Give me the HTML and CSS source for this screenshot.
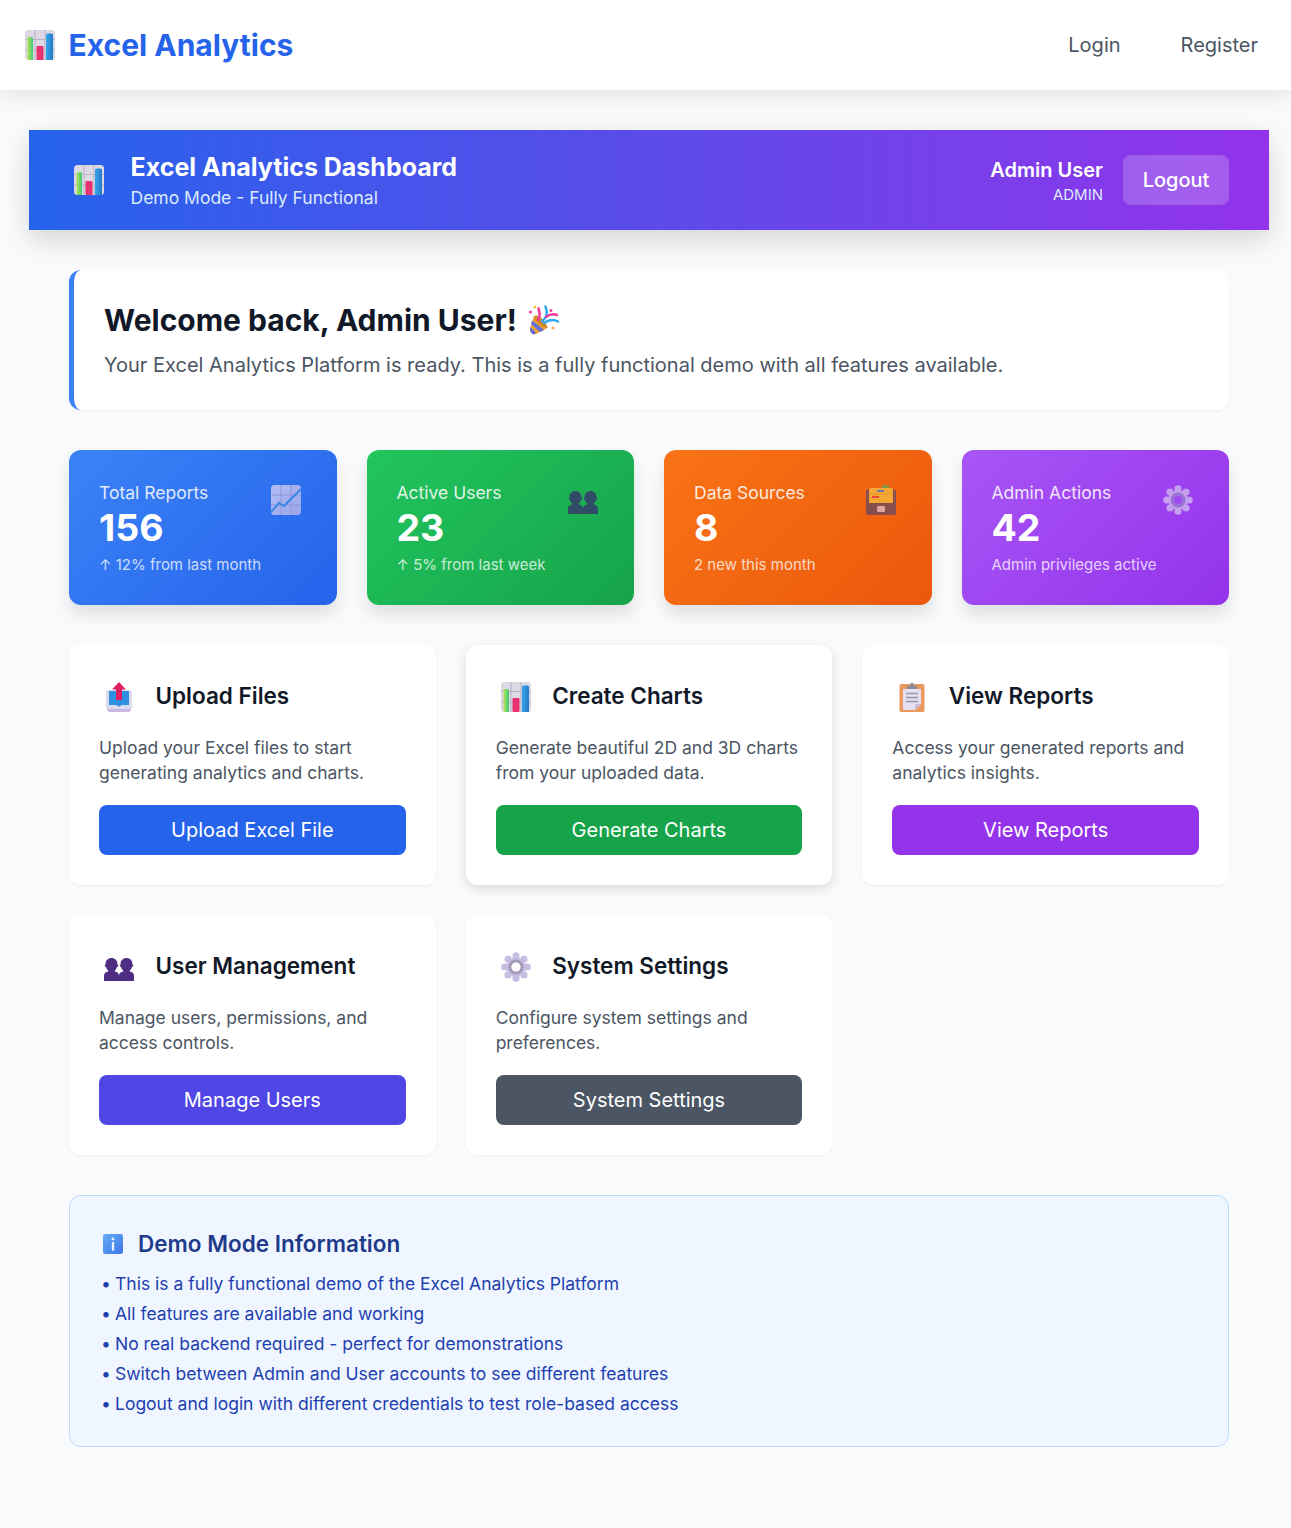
FILE: index.html
```html
<!DOCTYPE html>
<html lang="en">
<head>
    <meta charset="UTF-8">
    <meta name="viewport" content="width=device-width, initial-scale=1.0">
    <title>Excel Analytics Dashboard</title>
    <link rel="stylesheet" href="styles.css">
</head>
<body>
    <svg class="sprites" aria-hidden="true">
        <defs>
            <linearGradient id="barGreen" x1="0" y1="0" x2="1" y2="0"><stop offset="0" stop-color="#b4e655"/><stop offset="1" stop-color="#3fc878"/></linearGradient>
            <linearGradient id="barBlue" x1="0" y1="0" x2="1" y2="0"><stop offset="0" stop-color="#2ea8f0"/><stop offset="1" stop-color="#2a78c4"/></linearGradient>
            <linearGradient id="sheet" x1="0" y1="0" x2="1" y2="1"><stop offset="0" stop-color="#d4d0f4"/><stop offset="1" stop-color="#b8b4ea"/></linearGradient>
            <linearGradient id="infoBlue" x1="0" y1="0" x2="1" y2="1"><stop offset="0" stop-color="#62aef5"/><stop offset="1" stop-color="#3f74e8"/></linearGradient>
            <path id="person" d="M7.500 6c3.600 0 5.900 2.500 5.900 5.600 0 .3 0 .6-.1.9.6.1 1 .5 1 1.100 0 .7-.5 1.200-1.300 1.300-.4 1.500-1.100 2.700-2.200 3.500v1.200c2.400.3 4.200 1.700 4.200 4.200V29H0v-5.200c0-2.500 1.800-3.900 4.200-4.200v-1.200c-1.100-.8-1.800-2-2.200-3.500-.8-.1-1.300-.6-1.300-1.300 0-.6.4-1 1-1.100-.1-.3-.1-.6-.1-.9C1.600 8.500 3.900 6 7.500 6z"/>
        </defs>
        <symbol id="ic-bars" viewBox="0 0 30 30">
            <rect width="30" height="30" rx="3.500" fill="#dcd8e4"/>
            <path d="M0 9.500h30M0 20h30M10 0v30M20 0v30" stroke="#b9b3c4" stroke-width="1"/>
            <path d="M2.500 8.500a1.500 1.500 0 0 1 1.500-1.500h2.500a1.500 1.500 0 0 1 1.500 1.500V30H2.500z" fill="url(#barGreen)"/>
            <rect x="11.500" y="16" width="7" height="14" rx="1" fill="#e8316f"/>
            <path d="M21 5a1.500 1.500 0 0 1 1.500-1.500h4a1.500 1.500 0 0 1 1.500 1.500v25h-7z" fill="url(#barBlue)"/>
        </symbol>
        <symbol id="ic-party" viewBox="0 0 30 30">
            <path d="M5 11 18.500 23 6 29.500Q.5 29 1 23.500z" fill="#f0a030"/>
            <path d="M3 15.500 15 25 11 27 2 19zM1.500 22 7 28 4 29.500 1 26z" fill="#5a70e0"/>
            <path d="M5 11Q9 9 14 15T18.500 23Q14 23 9 18T5 11z" fill="#d08a28"/>
            <path d="M9 15Q12 11 9.500 3.500" fill="none" stroke="#f0399a" stroke-width="2.500" stroke-linecap="round"/>
            <path d="M13 16Q20 12 16.500 1.500" fill="none" stroke="#2ea8f0" stroke-width="2.500" stroke-linecap="round"/>
            <path d="M17 12Q22 8 28 10" fill="none" stroke="#f0399a" stroke-width="2.500" stroke-linecap="round"/>
            <path d="M15 18Q22 13 29 16.500" fill="none" stroke="#2ea8f0" stroke-width="2.500" stroke-linecap="round"/>
            <circle cx="6" cy="2" r="1.500" fill="#f5c842"/><circle cx="1.500" cy="7" r="1.500" fill="#f0399a"/>
            <circle cx="22" cy="5.500" r="1.500" fill="#f0399a"/><circle cx="24" cy="23" r="1.600" fill="#f0b060"/>
        </symbol>
        <symbol id="ic-trend" viewBox="0 0 30 30">
            <rect width="30" height="30" rx="3.500" fill="url(#sheet)"/>
            <path d="M0 10h30M0 20h30M10 0v30M20 0v30" stroke="#a09bd4" stroke-width=".8"/>
            <path d="M0 27 8 18l5 3L30 4" fill="none" stroke="#3a8fe0" stroke-width="2"/>
        </symbol>
        <symbol id="ic-people" viewBox="0 0 30 30">
            <use href="#person" fill="currentColor"/>
            <use href="#person" x="15" fill="currentColor"/>
        </symbol>
        <symbol id="ic-files" viewBox="0 0 30 30">
            <rect x="16" y="0" width="7" height="4" rx="1" fill="#6aa84f"/>
            <path d="M0 6.500a2 2 0 0 1 2-2h26a2 2 0 0 1 2 2V28a2 2 0 0 1-2 2H2a2 2 0 0 1-2-2z" fill="#6e4a5e"/>
            <path d="M3 5a2 2 0 0 1 2-2h20a2 2 0 0 1 2 2v13H3z" fill="#f5b83d"/>
            <rect x="11" y="5" width="7" height="2" fill="#4a80d0"/>
            <rect x="6" y="11" width="7" height="2" fill="#e8403f"/>
            <path d="M3 9h24" stroke="#e8a52c" stroke-width="1"/>
            <rect x="11" y="21" width="8" height="6" rx="1" fill="#d8b8c0"/>
        </symbol>
        <symbol id="ic-gear" viewBox="0 0 30 30">
            <g fill="currentColor">
                <circle cx="15" cy="3.800" r="3.600"/><circle cx="15" cy="26.200" r="3.600"/>
                <circle cx="3.800" cy="15" r="3.600"/><circle cx="26.200" cy="15" r="3.600"/>
                <circle cx="7" cy="7" r="3.600"/><circle cx="23" cy="7" r="3.600"/>
                <circle cx="7" cy="23" r="3.600"/><circle cx="23" cy="23" r="3.600"/>
                <circle cx="15" cy="15" r="9.800"/>
            </g>
            <circle cx="15" cy="15" r="6" fill="none" stroke="var(--ring, #a49ab8)" stroke-width="3"/>
            <circle cx="15" cy="15" r="4.600" fill="var(--hole, #fff)"/>
        </symbol>
        <symbol id="ic-upload" viewBox="0 0 30 30">
            <path d="M3 19h24v8a3 3 0 0 1-3 3H6a3 3 0 0 1-3-3z" fill="#c9b8e0"/>
            <rect x="2" y="8" width="26" height="19" rx="2.500" fill="#dcdaf0"/>
            <rect x="5" y="9" width="20" height="14" fill="#2e90e0"/>
            <path d="M5 22h7q1 2.500 3 2.500t3-2.500h7v1H5z" fill="#2e90e0"/>
            <path d="M15 0l7 7.500h-4V18h-6V7.500H8z" fill="#e01f62"/>
        </symbol>
        <symbol id="ic-clip" viewBox="0 0 30 30">
            <rect x="2.500" y="2" width="25" height="28" rx="1.500" fill="#ea9a5f"/>
            <path d="M6 7h18v15l-6 6H6z" fill="#e4e0f2"/>
            <path d="M9 11.500h12M9 15.500h12M9 19.500h12" stroke="#9a98a8" stroke-width="1.300"/>
            <path d="M24 22l-6 6v-6z" fill="#c4bedb"/>
            <path d="M10 7V4.500q0-1 1-1h2q.5-3 2-3t2 3h2q1 0 1 1V7z" fill="#8d8a94"/>
        </symbol>
        <symbol id="ic-info" viewBox="0 0 30 30">
            <rect width="30" height="30" rx="3.500" fill="url(#infoBlue)"/>
            <circle cx="15" cy="7.500" r="2.200" fill="#e8f0fc"/>
            <rect x="13.200" y="12" width="3.600" height="13" rx="1" fill="#e8f0fc"/>
        </symbol>
    </svg>

    <nav class="navbar">
        <a class="brand" href="#"><svg class="brand-icon"><use href="#ic-bars"/></svg>Excel Analytics</a>
        <div class="nav-links">
            <a href="#">Login</a>
            <a href="#">Register</a>
        </div>
    </nav>

    <div class="page">
        <header class="dash-header">
            <div class="dash-title">
                <svg class="dash-icon"><use href="#ic-bars"/></svg>
                <div class="dash-text">
                    <h1>Excel Analytics Dashboard</h1>
                    <p>Demo Mode - Fully Functional</p>
                </div>
            </div>
            <div class="dash-user">
                <div class="user-info">
                    <div class="user-name">Admin User</div>
                    <div class="user-role">ADMIN</div>
                </div>
                <button class="logout-btn">Logout</button>
            </div>
        </header>

        <main class="content">
            <section class="welcome">
                <h2>Welcome back, Admin User! <svg class="welcome-icon"><use href="#ic-party"/></svg></h2>
                <p>Your Excel Analytics Platform is ready. This is a fully functional demo with all features available.</p>
            </section>

            <section class="stats">
                <div class="stat stat-blue">
                    <div class="stat-top">
                        <div class="stat-label">Total Reports</div>
                        <svg class="stat-icon"><use href="#ic-trend"/></svg>
                    </div>
                    <div class="stat-value">156</div>
                    <div class="stat-note">↑ 12% from last month</div>
                </div>
                <div class="stat stat-green">
                    <div class="stat-top">
                        <div class="stat-label">Active Users</div>
                        <svg class="stat-icon people-dark"><use href="#ic-people"/></svg>
                    </div>
                    <div class="stat-value">23</div>
                    <div class="stat-note">↑ 5% from last week</div>
                </div>
                <div class="stat stat-orange">
                    <div class="stat-top">
                        <div class="stat-label">Data Sources</div>
                        <svg class="stat-icon"><use href="#ic-files"/></svg>
                    </div>
                    <div class="stat-value">8</div>
                    <div class="stat-note">2 new this month</div>
                </div>
                <div class="stat stat-purple">
                    <div class="stat-top">
                        <div class="stat-label">Admin Actions</div>
                        <svg class="stat-icon gear-on-purple"><use href="#ic-gear"/></svg>
                    </div>
                    <div class="stat-value">42</div>
                    <div class="stat-note">Admin privileges active</div>
                </div>
            </section>

            <section class="actions">
                <div class="action-card">
                    <div class="action-head"><svg class="action-icon"><use href="#ic-upload"/></svg><h3>Upload Files</h3></div>
                    <p>Upload your Excel files to start generating analytics and charts.</p>
                    <button class="action-btn btn-blue">Upload Excel File</button>
                </div>
                <div class="action-card is-hover">
                    <div class="action-head"><svg class="action-icon"><use href="#ic-bars"/></svg><h3>Create Charts</h3></div>
                    <p>Generate beautiful 2D and 3D charts from your uploaded data.</p>
                    <button class="action-btn btn-green">Generate Charts</button>
                </div>
                <div class="action-card">
                    <div class="action-head"><svg class="action-icon"><use href="#ic-clip"/></svg><h3>View Reports</h3></div>
                    <p>Access your generated reports and analytics insights.</p>
                    <button class="action-btn btn-purple">View Reports</button>
                </div>
                <div class="action-card">
                    <div class="action-head"><svg class="action-icon people-purple"><use href="#ic-people"/></svg><h3>User Management</h3></div>
                    <p>Manage users, permissions, and access controls.</p>
                    <button class="action-btn btn-indigo">Manage Users</button>
                </div>
                <div class="action-card">
                    <div class="action-head"><svg class="action-icon gear-light"><use href="#ic-gear"/></svg><h3>System Settings</h3></div>
                    <p>Configure system settings and preferences.</p>
                    <button class="action-btn btn-gray">System Settings</button>
                </div>
            </section>

            <section class="demo-info">
                <h3><svg class="info-icon"><use href="#ic-info"/></svg>Demo Mode Information</h3>
                <ul>
                    <li>This is a fully functional demo of the Excel Analytics Platform</li>
                    <li>All features are available and working</li>
                    <li>No real backend required - perfect for demonstrations</li>
                    <li>Switch between Admin and User accounts to see different features</li>
                    <li>Logout and login with different credentials to test role-based access</li>
                </ul>
            </section>
        </main>
    </div>
</body>
</html>
```

FILE: styles.css
```css
* {
    box-sizing: border-box;
}
body {
    margin: 0;
    min-height: 1528px;
    font-family: Inter, 'Noto Sans', sans-serif;
    background-color: #f9fafb;
    color: #111827;
}
h1, h2, h3, p, ul {
    margin: 0;
    padding: 0;
}
button {
    font-family: inherit;
    border: none;
    cursor: pointer;
}
.sprites {
    position: absolute;
    width: 0;
    height: 0;
}

/* top nav */
.navbar {
    height: 90px;
    display: flex;
    align-items: center;
    justify-content: space-between;
    padding: 0 33px 0 25px;
    background: white;
    box-shadow: 0 4px 20px rgba(0,0,0,0.1);
}
.brand {
    display: flex;
    align-items: center;
    gap: 13.5px;
    font-size: 30px;
    font-weight: 700;
    color: #2563eb;
    text-decoration: none;
}
.brand-icon {
    width: 30px;
    height: 30px;
}
.nav-links {
    display: flex;
    gap: 60px;
}
.nav-links a {
    font-size: 20px;
    color: #4b5563;
    text-decoration: none;
}

/* dashboard header */
.page {
    width: 1240px;
    margin: 40px 0 0 29px;
}
.dash-header {
    height: 100px;
    display: flex;
    align-items: center;
    justify-content: space-between;
    padding: 0 40px 0 45px;
    color: white;
    background: linear-gradient(90deg, #2563eb, #9333ea);
    box-shadow: 0 10px 25px rgba(0,0,0,0.15);
}
.dash-title {
    display: flex;
    align-items: center;
    gap: 26.5px;
}
.dash-icon {
    width: 30px;
    height: 30px;
}
.dash-text {
    margin-top: 3px;
}
.dash-title h1 {
    font-size: 25px;
    line-height: 32px;
    font-weight: 700;
}
.dash-title p {
    margin-top: 1px;
    font-size: 17.5px;
    line-height: 28px;
    color: #dbeafe;
}
.dash-user {
    display: flex;
    align-items: center;
    gap: 20px;
}
.user-info {
    padding-top: 1px;
    text-align: right;
}
.user-name {
    font-size: 20px;
    line-height: 28px;
    font-weight: 600;
}
.user-role {
    margin-top: 1px;
    font-size: 15px;
    line-height: 20px;
    color: #dbeafe;
}
.logout-btn {
    width: 106px;
    height: 50px;
    border-radius: 8px;
    font-size: 20px;
    font-weight: 500;
    color: white;
    background: rgba(255,255,255,0.2);
}

/* main content */
.content {
    padding: 40px 40px 0;
}
.welcome {
    height: 140px;
    padding: 30px 30px 0;
    background: white;
    border-left: 5px solid #3b82f6;
    border-radius: 12px;
    box-shadow: 0 1px 3px rgba(0,0,0,0.05);
}
.welcome h2 {
    font-size: 30px;
    line-height: 40px;
    font-weight: 700;
    display: flex;
    align-items: center;
    gap: 12.5px;
}
.welcome-icon {
    width: 30px;
    height: 30px;
}
.welcome p {
    margin-top: 10px;
    font-size: 20px;
    line-height: 30px;
    color: #4b5563;
}

/* stat cards */
.stats {
    margin-top: 40px;
    display: grid;
    grid-template-columns: repeat(4, 1fr);
    gap: 30px;
}
.stat {
    height: 155px;
    padding: 30px;
    color: white;
    border-radius: 12px;
    box-shadow: 0 10px 15px rgba(0,0,0,0.1);
}
.stat-blue { background: linear-gradient(135deg, #3b82f6, #2563eb); }
.stat-green { background: linear-gradient(135deg, #22c55e, #16a34a); }
.stat-orange { background: linear-gradient(135deg, #f97316, #ea580c); }
.stat-purple { background: linear-gradient(135deg, #a855f7, #9333ea); }
.stat-top {
    display: flex;
    justify-content: space-between;
    height: 26px;
}
.stat-label {
    font-size: 17.5px;
    line-height: 26px;
    opacity: 0.85;
}
.stat-icon {
    flex: none;
    width: 30px;
    height: 30px;
    margin: 5px 6px 0 0;
    opacity: 0.8;
}
.people-dark {
    color: #38346e;
}
.gear-on-purple {
    color: #d0b8f0;
    --hole: #a04ff0;
    --ring: #9a7fc8;
}
.stat-value {
    font-size: 37.5px;
    line-height: 50px;
    font-weight: 700;
    margin-top: -3px;
}
.stat-note {
    margin-top: 1px;
    font-size: 15px;
    line-height: 22px;
    opacity: 0.75;
}

/* action cards */
.actions {
    margin-top: 40px;
    display: grid;
    grid-template-columns: repeat(3, 1fr);
    gap: 30px;
}
.action-card {
    height: 240px;
    padding: 30px;
    background: white;
    border-radius: 12px;
    box-shadow: 0 1px 3px rgba(0,0,0,0.05);
}
.action-card.is-hover {
    box-shadow: 0 4px 12px rgba(0,0,0,0.12);
}
.action-head {
    display: flex;
    align-items: center;
    gap: 21.5px;
    height: 44px;
}
.action-icon {
    flex: none;
    width: 30px;
    height: 30px;
    margin-left: 5px;
}
.people-purple {
    color: #4f2d83;
}
.gear-light {
    color: #c5bde2;
}
.action-head h3 {
    margin-bottom: 4px;
    font-size: 22.5px;
    font-weight: 600;
}
.action-card p {
    margin-top: 16px;
    height: 50px;
    font-size: 17.5px;
    line-height: 25px;
    color: #4b5563;
}
.action-btn {
    display: block;
    width: 100%;
    height: 50px;
    margin-top: 20px;
    border-radius: 8px;
    font-size: 20px;
    font-weight: 400;
    color: white;
}
.btn-blue { background: #2563eb; }
.btn-green { background: #16a34a; }
.btn-purple { background: #9333ea; }
.btn-indigo { background: #4f46e5; }
.btn-gray { background: #4b5563; }

/* demo info */
.demo-info {
    margin-top: 40px;
    height: 252px;
    padding: 30px 30px 0 33px;
    background: #eff6ff;
    border: 1px solid #bfdbfe;
    border-radius: 12px;
}
.demo-info h3 {
    display: flex;
    align-items: center;
    gap: 15px;
    height: 34px;
    font-size: 22.5px;
    font-weight: 600;
    color: #1e3a8a;
}
.info-icon {
    width: 20px;
    height: 20px;
    margin-top: 2px;
}
.demo-info ul {
    margin: 9px 0 0 -2px;
    list-style: none;
    font-size: 17.5px;
    line-height: 30px;
    color: #1e40af;
}
.demo-info li::before {
    content: "•";
    display: inline-block;
    width: 14px;
}
```
